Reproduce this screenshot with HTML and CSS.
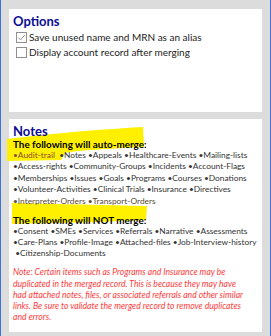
FILE: index.html
```html
<!DOCTYPE html>
<html>
<head>
<meta charset="utf-8">
<link rel="stylesheet" href="styles.css">
</head>
<body>
<div class="frame">
  <section class="panel options">
    <h2 class="title">Options</h2>
    <div class="check-row">
      <span class="box"><svg viewBox="0 0 11 11" width="11" height="11"><path d="M2.3 5.7 L4.5 7.9 L8.8 3" fill="none" stroke="#8f8f8f" stroke-width="1"/></svg></span>
      <span class="label">Save unused name and MRN as an alias</span>
    </div>
    <div class="check-row">
      <span class="box"></span>
      <span class="label">Display account record after merging</span>
    </div>
  </section>
  <section class="panel notes">
    <svg class="hl" width="253" height="213" viewBox="0 0 253 213">
      <path d="M-2 20 C30 16 80 11 134 8 L135 28 C100 30 70 31 56 34 L52 41 L-2 42 Z" fill="#fff000"/>
      <path d="M3 84 C50 85 100 86 138 87 L137 101 C100 103 50 104 3 105 Z" fill="#fff000"/>
    </svg>
    <h2 class="title">Notes</h2>
    <div class="group">
      <h3 class="sub">The following will auto-merge:</h3>
      <p class="list"><span class="ln"><span class="tint">•Audit-trail</span>&nbsp; •Notes •Appeals •Healthcare-Events •Mailing-lists</span><span class="ln">•Access-rights •Community-Groups •Incidents •Account-Flags</span><span class="ln">•Memberships •Issues •Goals •Programs •Courses •Donations</span><span class="ln">•Volunteer-Activities •Clinical Trials •Insurance •Directives</span><span class="ln tint2">•Interpreter-Orders •Transport-Orders</span></p>
    </div>
    <div class="group">
      <h3 class="sub">The following will NOT merge:</h3>
      <p class="list"><span class="ln">•Consent •SMEs •Services •Referrals •Narrative •Assessments</span><span class="ln">•Care-Plans •Profile-Image •Attached-files •Job-Interview-history</span><span class="ln">&nbsp;•Citizenship-Documents</span></p>
    </div>
    <p class="warn"><span class="ln">Note: Certain items such as Programs and Insurance may be</span><span class="ln">duplicated in the merged record. This is because they may have</span><span class="ln">had attached notes, files, or associated referrals and other similar</span><span class="ln">links. Be sure to validate the merged record to remove duplicates</span><span class="ln">and errors.</span></p>
  </section>
</div>
</body>
</html>
```
FILE: styles.css
```css
html, body {
  margin: 0;
  padding: 0;
}
body {
  width: 271px;
  height: 336px;
  overflow: hidden;
  font-family: "Lato", "Noto Sans", sans-serif;
}
.frame {
  box-sizing: border-box;
  width: 271px;
  height: 336px;
  background: #dcdcdc;
  border-left: 1px solid #3d72d8;
  border-right: 1px solid #3d72d8;
  padding: 9px 8px 4px 8px;
  display: flex;
  flex-direction: column;
  gap: 7px;
}
.panel {
  background: #fff;
  padding: 0 4px;
}
.options {
  height: 103px;
  flex: none;
  box-sizing: border-box;
  padding-top: 4px;
}
.notes {
  flex: 1;
  padding-top: 4px;
  position: relative;
}
.hl {
  position: absolute;
  left: 0;
  top: 0;
  overflow: visible;
  filter: blur(0.7px);
}
.title {
  margin: 0;
  font-size: 13px;
  line-height: 16px;
  font-weight: 700;
  color: #0c0c94;
  position: relative;
}
.options .title {
  line-height: 17px;
}
.check-row {
  display: flex;
  align-items: center;
  gap: 2px;
  padding-left: 3px;
  height: 15px;
}
.box {
  box-sizing: border-box;
  width: 11px;
  height: 11px;
  border: 1px solid #8f8f8f;
  display: flex;
  flex: none;
}
.box svg { display: block; margin: -1px; }
.label {
  font-size: 10px;
  color: #222;
  line-height: 15px;
  white-space: nowrap;
}
.group {
  position: relative;
}
.sub {
  margin: 0;
  font-size: 9.9px;
  line-height: 11px;
  font-weight: 700;
  color: #000;
}
.list {
  margin: 0 0 7.5px 0;
  font-size: 8.35px;
  line-height: 11.4px;
  color: #333;
}
.ln {
  display: block;
  white-space: nowrap;
}
.tint {
  color: #8a4a3e;
}
.tint2 {
  color: #5a4a30;
}
.warn {
  margin: 0;
  position: relative;
  padding-top: 0.2px;
  font-size: 8.6px;
  line-height: 11.2px;
  font-style: italic;
  color: #ff3a3a;
}
```
